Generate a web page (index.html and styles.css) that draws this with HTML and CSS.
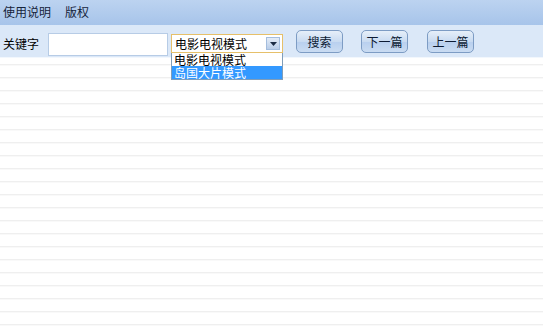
FILE: index.html
```html
<!DOCTYPE html>
<html>
<head>
<meta charset="utf-8">
<link rel="stylesheet" href="styles.css">
</head>
<body>
<div class="menubar">
  <span class="menu-item">使用说明</span>
  <span class="menu-item">版权</span>
</div>
<div class="toolbar">
  <span class="label">关键字</span>
  <div class="input"></div>
  <div class="select-wrap">
    <div class="select">
      <span class="select-text">电影电视模式</span>
      <span class="select-btn"><svg width="7" height="4" viewBox="0 0 7 4"><path d="M0 0h7L3.5 4z" fill="#1b2b44"/></svg></span>
    </div>
    <div class="dropdown">
      <div class="opt">电影电视模式</div>
      <div class="opt sel">岛国大片模式</div>
    </div>
  </div>
  <div class="btn b1">搜索</div>
  <div class="btn b2">下一篇</div>
  <div class="btn b3">上一篇</div>
</div>
<div class="list">
  <div class="row first"></div>
  <div class="row"></div><div class="row"></div><div class="row"></div><div class="row"></div>
  <div class="row"></div><div class="row"></div><div class="row"></div><div class="row"></div>
  <div class="row"></div><div class="row"></div><div class="row"></div><div class="row"></div>
  <div class="row"></div><div class="row"></div><div class="row"></div><div class="row"></div>
  <div class="row"></div><div class="row"></div><div class="row"></div><div class="row"></div>
</div>
</body>
</html>
```
FILE: styles.css
```css
html, body {
  margin: 0;
  padding: 0;
  background: #ffffff;
  width: 543px;
  height: 334px;
  overflow: hidden;
  font-family: "Noto Sans CJK SC", "Noto Sans", sans-serif;
  font-size: 12px;
  color: #000;
}
.menubar {
  height: 25px;
  display: flex;
  align-items: center;
  background: linear-gradient(#bcd3f0, #a7c4ea);
  box-sizing: border-box;
  padding-left: 3px;
  gap: 14px;
  color: #15233a;
}
.menu-item {
  line-height: 14px;
  margin-top: -2px;
}
.toolbar {
  height: 33px;
  background: #dbe8f8;
  border-bottom: 1px solid #f2f7fd;
  display: flex;
  align-items: flex-start;
  position: relative;
  box-sizing: border-box;
}
.label {
  margin-left: 3px;
  margin-top: 12px;
  line-height: 14px;
}
.input {
  margin-left: 9px;
  margin-top: 8px;
  width: 120px;
  height: 23px;
  box-sizing: border-box;
  background: #fff;
  border: 1px solid #b7cce6;
}
.select-wrap {
  margin-left: 3px;
  margin-top: 9px;
  position: relative;
  width: 112px;
}
.select {
  height: 19px;
  box-sizing: border-box;
  border: 1px solid #e6c06a;
  background: #fff;
  display: flex;
  align-items: center;
  justify-content: space-between;
}
.select-text {
  padding-left: 3px;
  line-height: 14px;
}
.select-btn {
  width: 14px;
  height: 13px;
  margin-right: 2px;
  background: linear-gradient(#e4ecf7, #b9cde8);
  border: 1px solid #a4bddd;
  box-sizing: border-box;
  display: flex;
  align-items: center;
  justify-content: center;
}
.dropdown {
  position: absolute;
  left: 0;
  top: 19px;
  width: 112px;
  box-sizing: border-box;
  border: 1px solid #7f9db9;
  border-top: none;
  background: #fff;
  z-index: 2;
}
.opt {
  height: 13px;
  line-height: 13px;
  padding-left: 2px;
}
.opt.sel {
  background: #3399ff;
  color: #fff;
}
.btn {
  margin-top: 5px;
  width: 47px;
  height: 23px;
  box-sizing: border-box;
  border: 1px solid #7d9cc4;
  border-radius: 5px;
  background: linear-gradient(#e6eff9, #c9dbf1 50%, #b8cfee 51%, #cadcf2);
  display: flex;
  align-items: center;
  justify-content: center;
  color: #0d1b33;
  line-height: 14px;
}
.b1 { margin-left: 13px; }
.b2 { margin-left: 18px; }
.b3 { margin-left: 19px; }
.list {
  display: flex;
  flex-direction: column;
}
.row {
  height: 13px;
  box-sizing: border-box;
  border-bottom: 1px solid #efefef;
  box-shadow: 0 1px 0 #f9f9f9;
}
.row.first {
  height: 7px;
}
```
